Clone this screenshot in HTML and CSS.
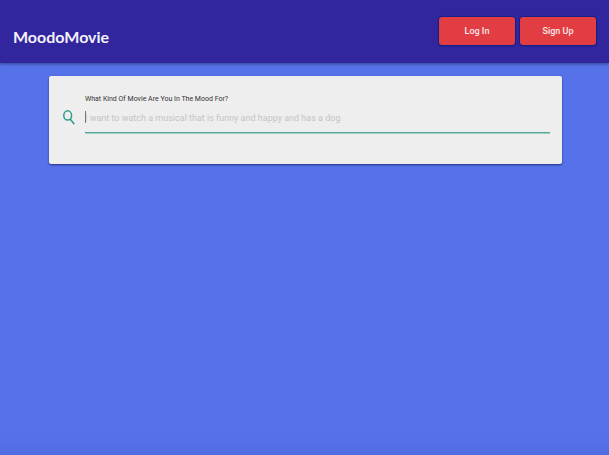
FILE: index.html
```html
<!DOCTYPE html>
<html lang="en">
<head>
<meta charset="utf-8">
<meta name="viewport" content="width=device-width, initial-scale=1">
<title>MoodoMovie</title>
<link rel="stylesheet" href="styles.css">
</head>
<body>
<header class="navbar">
  <a class="brand" href="#">MoodoMovie</a>
  <nav class="actions">
    <button class="btn" type="button">Log In</button>
    <button class="btn" type="button">Sign Up</button>
  </nav>
</header>
<main class="content">
  <form class="card">
    <svg class="search-icon" viewBox="0 0 12 15" aria-hidden="true">
      <ellipse cx="4.7" cy="5.4" rx="3.9" ry="4.6"/>
      <path d="M7.2 9L11.3 14.2"/>
    </svg>
    <div class="field">
      <label class="label" for="mood">What Kind Of Movie Are You In The Mood For?</label>
      <div class="input-wrap">
        <input class="input" id="mood" type="text" placeholder="I want to watch a musical that is funny and happy and has a dog">
      </div>
    </div>
  </form>
</main>
</body>
</html>
```
FILE: styles.css
```css
* {
  box-sizing: border-box;
}

body {
  margin: 0;
  min-height: 100vh;
  background: linear-gradient(#5572e9 calc(100% - 20px), #506de4) #5572e9;
  font-family: Roboto, sans-serif;
}

.navbar {
  display: flex;
  align-items: center;
  justify-content: space-between;
  height: 63px;
  padding: 0 13px;
  background: #31269e;
  box-shadow: 0 1px 3px rgba(0, 0, 0, 0.4);
}

.brand {
  padding-top: 10px;
  color: #f3f1fa;
  font-family: Lato, sans-serif;
  font-size: 16px;
  font-weight: 700;
  line-height: 24px;
  text-decoration: none;
}

.actions {
  display: flex;
  gap: 5px;
  padding-bottom: 2px;
}

.btn {
  width: 76px;
  height: 28px;
  padding: 0;
  border: 0;
  border-radius: 3px;
  background: #e23d42;
  box-shadow: 0 0 1px 1px #14208c, 0 1px 2px rgba(0, 0, 0, 0.3);
  color: #fbeaea;
  font-family: inherit;
  font-size: 9px;
  font-weight: 500;
}

.content {
  padding: 13px 47px 13px 49px;
}

.card {
  display: flex;
  gap: 10px;
  min-height: 88px;
  padding: 17px 12px 30px 14px;
  border-radius: 2px;
  background: #eee;
  box-shadow: 0 1px 2px rgba(20, 20, 90, 0.7);
}

.search-icon {
  flex: none;
  width: 12px;
  height: 15px;
  margin-top: 17px;
  fill: none;
  stroke: #349b8c;
  stroke-width: 1.5;
}

.field {
  flex: 1;
}

.label {
  display: block;
  color: #333;
  font-size: 7px;
  line-height: 12px;
}

.input-wrap {
  position: relative;
}

.input-wrap::before {
  content: "";
  position: absolute;
  top: 6px;
  left: 0;
  width: 1px;
  height: 12px;
  background: #777;
}

.input {
  display: block;
  width: 100%;
  height: 28px;
  padding: 0 0 2px;
  border: 0;
  border-bottom: 1px solid #55a99b;
  outline: 0;
  background: transparent;
  box-shadow: 0 1px 0 #a0cfc7;
  font-family: inherit;
  font-size: 9px;
}

.input::placeholder {
  color: #c4c4c4;
  opacity: 1;
}
```
